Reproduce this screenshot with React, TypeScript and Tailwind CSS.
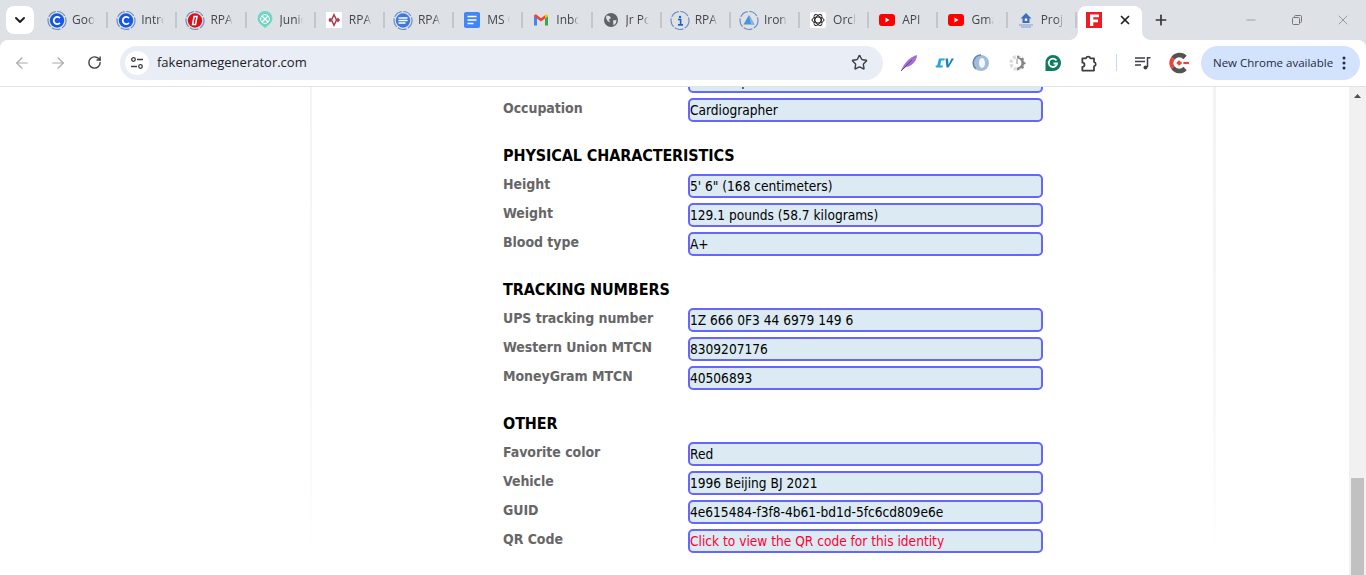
import React from 'react';
import { ArrowLeft, ArrowRight, ChevronDown, Minus, Plus, RotateCw, Star, X } from 'lucide-react';

const Ring: React.FC<{ children: React.ReactNode }> = ({ children }) => (
  <svg width="21" height="21" viewBox="0 0 20 20">
    <circle cx="10" cy="10" r="9" fill="none" stroke="#6f8cc0" strokeWidth="1.2" strokeDasharray="9 1.6" />
    {children}
  </svg>
);

const CoinC = () => (
  <Ring>
    <circle cx="10" cy="10" r="7.2" fill="#1558e6" />
    <path d="M13 7.600a3.600 3.600 0 1 0 0 4.800" fill="none" stroke="#fff" strokeWidth="1.800" />
  </Ring>
);

const CoinD = () => (
  <Ring>
    <circle cx="10" cy="10" r="7.200" fill="#d8101a" />
    <path d="M9 6h3l-1.400 8H7.600z" fill="none" stroke="#fff" strokeWidth="1.500" />
  </Ring>
);

const CoinLines = () => (
  <Ring>
    <circle cx="10" cy="10" r="7.200" fill="#3d78e6" />
    <path d="M6 7.500h8M6 10h8M6 12.500h6" stroke="#fff" strokeWidth="1.500" strokeLinecap="round" />
  </Ring>
);

const CoinInfo = () => (
  <Ring>
    <circle cx="10" cy="6.500" r="1.200" fill="#1d5fc4" />
    <path d="M8 9h2.600v5M8 14.400h5" fill="none" stroke="#1d5fc4" strokeWidth="1.600" />
  </Ring>
);

const CoinIron = () => (
  <Ring>
    <path d="M10 4.500l5.500 9.500h-11z" fill="#4a94d6" />
    <path d="M10 4.500l2 9.500h3.500z" fill="#7fb8e6" />
  </Ring>
);

const Pin = () => (
  <svg width="16" height="18" viewBox="0 0 16 18">
    <path d="M8 17L2.600 12.400A7.400 7.400 0 1 1 13.400 12.400z" fill="#6fd6c6" />
    <path d="M5 5l6 6M11 5l-6 6" stroke="#fff" strokeWidth="1.400" />
    <circle cx="8" cy="8" r="4.400" fill="none" stroke="#fff" strokeWidth="1" />
  </svg>
);

const Diamonds = () => (
  <svg width="16" height="16" viewBox="0 0 16 16">
    <rect width="16" height="16" fill="#fff" />
    <path d="M8 1l3.400 7L8 15 4.600 8z" fill="#b33a55" />
    <path d="M8 4.600l1.700 3.400L8 11.400 6.300 8z" fill="#fff" />
    <path d="M4 5.600L6 8l-2 2.600L2.400 8zM12 5.600L14 8l-2 2.600L10 8z" fill="#a8405a" />
  </svg>
);

const Docs = () => (
  <svg width="16" height="16" viewBox="0 0 16 16">
    <rect width="16" height="16" rx="2" fill="#4285f4" />
    <path d="M3.500 4.500h9M3.500 8h9M3.500 11.500h6" stroke="#fff" strokeWidth="1.500" />
  </svg>
);

const Gmail = () => (
  <svg width="16" height="16" viewBox="0 0 16 16">
    <path d="M1 13.500V4l3 2.200v7.300z" fill="#4285f4" />
    <path d="M12 13.500V6.200L15 4v9.500z" fill="#34a853" />
    <path d="M1 4.200C1 2.600 2.600 2 3.600 2.800L8 6.200 12 3.200 12 6.600 8 9.500 1 4.200z" fill="#ea4335" />
    <path d="M12 3.200l.4-.4C13.500 2 15 2.700 15 4.200l-3 2.400z" fill="#fbbc04" />
  </svg>
);

const Globe = () => (
  <svg width="16" height="16" viewBox="0 0 16 16">
    <circle cx="8" cy="8" r="7" fill="#5f6368" />
    <path d="M3.500 3.500l3 .5 1.500 2-2 1.500 1 3-2.500-1.500-1.500-3zM10 8.500l3.500-.5-.5 3-2.500 2.500z" fill="#dee1e6" />
  </svg>
);

const Knot = () => (
  <svg width="16" height="16" viewBox="0 0 16 16">
    <rect width="16" height="16" rx="2" fill="#fff" />
    <g fill="none" stroke="#222" strokeWidth="1">
      <ellipse cx="8" cy="8" rx="6" ry="3" />
      <ellipse cx="8" cy="8" rx="6" ry="3" transform="rotate(60 8 8)" />
      <ellipse cx="8" cy="8" rx="6" ry="3" transform="rotate(120 8 8)" />
    </g>
  </svg>
);

const YouTube = () => (
  <svg width="16" height="16" viewBox="0 0 16 16">
    <rect y="2" width="16" height="12" rx="3" fill="#f00" />
    <path d="M6.500 5.500l4 2.500-4 2.500z" fill="#fff" />
  </svg>
);

const House = () => (
  <svg width="16" height="16" viewBox="0 0 16 16">
    <path d="M8 1L2.500 6.500h2V11h7V6.500h2z" fill="#3f6fb8" />
    <rect x="6.800" y="6.500" width="2.400" height="2.400" fill="#fff" />
    <path d="M1 13h14M3 15h10" stroke="#7c9fd0" strokeWidth="1.200" />
  </svg>
);

const LetterF = () => (
  <svg width="16" height="16" viewBox="0 0 16 16">
    <rect width="16" height="16" fill="#ee1c25" />
    <path d="M4 2.500h9v2.800H7.300v2.200h4.700v2.700H7.300v3.800H4z" fill="#fff" />
  </svg>
);

const tabs: { title: string; icon: React.ReactNode }[] = [
  { title: 'Google', icon: <CoinC /> },
  { title: 'Introduction', icon: <CoinC /> },
  { title: 'RPA', icon: <CoinD /> },
  { title: 'Junior', icon: <Pin /> },
  { title: 'RPA', icon: <Diamonds /> },
  { title: 'RPA', icon: <CoinLines /> },
  { title: 'MS Office', icon: <Docs /> },
  { title: 'Inbox', icon: <Gmail /> },
  { title: 'Jr Power', icon: <Globe /> },
  { title: 'RPA', icon: <CoinInfo /> },
  { title: 'Iron', icon: <CoinIron /> },
  { title: 'Orchestrator', icon: <Knot /> },
  { title: 'API', icon: <YouTube /> },
  { title: 'Gmail', icon: <YouTube /> },
  { title: 'Project', icon: <House /> },
];

const TabBar = () => (
  <div className="flex h-10 items-start bg-[#dee1e6] pl-[6px]">
    <div className="mr-1 mt-[6px] flex h-7 w-7 items-center justify-center rounded-lg bg-white">
      <ChevronDown size={16} strokeWidth={3} className="text-[#222]" />
    </div>
    {tabs.map((tab, idx) => (
      <div key={idx} className="relative flex h-10 w-[69.2px] shrink-0 items-center pl-[9px]">
        <div className="flex w-5 shrink-0 items-center justify-center">{tab.icon}</div>
        <span className="ml-[5px] w-[23px] overflow-hidden whitespace-nowrap text-xs text-[#45474a] [mask-image:linear-gradient(to_right,black_70%,transparent)]">
          {tab.title}
        </span>
        <div className="absolute -right-px top-3 h-4 w-[2px] bg-[#c3c6cb]" />
      </div>
    ))}
    <div className="relative ml-[2px] mt-[6px] flex h-[34px] w-[64px] items-center rounded-t-lg bg-white pb-[6px] pl-2">
      <span className="absolute -left-2 bottom-0 h-2 w-2 bg-[radial-gradient(circle_at_0_0,transparent_7.5px,white_8px)]" />
      <span className="absolute -right-2 bottom-0 h-2 w-2 bg-[radial-gradient(circle_at_100%_0,transparent_7.5px,white_8px)]" />
      <LetterF />
      <X size={14} strokeWidth={3} className="ml-[16px] text-[#222]" />
    </div>
    <Plus size={16} strokeWidth={2.5} className="ml-[11px] mt-3 text-[#333]" />
    <div className="ml-auto flex h-10 items-center">
      <div className="flex w-[46px] justify-center"><Minus size={14} strokeWidth={1} className="text-[#777]" /></div>
      <div className="flex w-[46px] justify-center">
        <svg width="12" height="12" viewBox="0 0 12 12" fill="none" stroke="#777" strokeWidth="1">
          <rect x="1.500" y="3.500" width="7" height="7" rx="1" />
          <path d="M3.500 3.500v-1a1 1 0 0 1 1-1h5a1 1 0 0 1 1 1v5a1 1 0 0 1-1 1h-1" />
        </svg>
      </div>
      <div className="flex w-[46px] justify-center"><X size={16} strokeWidth={1} className="text-[#777]" /></div>
    </div>
  </div>
);

const Feather = () => (
  <svg width="18" height="18" viewBox="0 0 18 18">
    <path d="M1 17C3 11 9 3 17 1c0 5-4 11-11 12z" fill="#a56fd0" />
    <path d="M1 17L12 6" stroke="#6d3c9e" strokeWidth="1" />
  </svg>
);

const CvIcon = () => (
  <svg width="20" height="18" viewBox="0 0 20 18">
    <circle cx="1.500" cy="12.500" r="1" fill="#29a3e0" />
    <path d="M4 4.500h6l-.8 2H6.200l-1 5H8l-.5 2H3c-1 0-1.200-.6-1-1.500z" fill="#29a3e0" />
    <path d="M10.500 4.500H13l.5 6 3-6H19l-5.500 9h-2z" fill="#1d82c4" />
  </svg>
);

const SphereIcon = () => (
  <svg width="18" height="18" viewBox="0 0 18 18">
    <circle cx="9" cy="9" r="8" fill="#a3bcd8" />
    <ellipse cx="10" cy="9" rx="3" ry="5" fill="#f4f8fb" />
    <path d="M9 1a8 8 0 0 0-5 14" fill="none" stroke="#5d86b3" strokeWidth="1.500" />
  </svg>
);

const GearIcon = () => (
  <svg width="18" height="18" viewBox="0 0 18 18">
    <circle cx="9" cy="9" r="6" fill="none" stroke="#dcdcdc" strokeWidth="3.500" strokeDasharray="3 1.700" />
    <path d="M9 1.500V4.500A4.500 4.500 0 0 1 9 13.500v3l2-.5 .5-1.600 1.800-.4 1.400 1 1.300-1.600-.8-1.600 .9-1.600 1.500-.3V8.500L16 8l-.8-1.700.8-1.500-1.400-1.400-1.500.9L11.500 3.800 11 2z" fill="#858585" />
    <path d="M9 5v5" stroke="#8a8a8a" strokeWidth="1" />
  </svg>
);

const GrammarlyIcon = () => (
  <svg width="18" height="18" viewBox="0 0 18 18">
    <path d="M9 1a8 8 0 0 1 0 16H1.500V9A7.500 7.500 0 0 1 9 1z" fill="#0f7a5f" />
    <path d="M12.500 6.500a4.200 4.200 0 1 0 .6 3H9.500" fill="none" stroke="#fff" strokeWidth="1.800" />
  </svg>
);

const PuzzleIcon = () => (
  <svg width="20" height="20" viewBox="0 0 18 18" fill="none" stroke="#3c3f43" strokeWidth="1.600" strokeLinejoin="round">
    <path d="M2.500 4.500h3.300a2 2 0 0 1 3.900 0H13v3.300a2 2 0 0 1 0 3.900v3.800H2.500v-3.300a1.800 1.800 0 0 0 0-3.900z" transform="translate(.5 .3)" />
  </svg>
);

const MediaIcon = () => (
  <svg width="18" height="18" viewBox="0 0 18 18" fill="none" stroke="#3c3f43" strokeWidth="1.500">
    <path d="M1 4h10M1 7.500h10M1 11h6" />
    <path d="M13.500 13V3.800h3" />
    <circle cx="11.500" cy="13.500" r="2" fill="#3c3f43" stroke="none" />
  </svg>
);

const CIcon = () => (
  <svg width="22" height="22" viewBox="0 0 20 20">
    <path d="M17 3.500A9 9 0 0 0 3 4.500L6 7a5 5 0 0 1 8-.5z" fill="#55534f" />
    <path d="M3 4.500a9 9 0 0 0 0 11L6 13a5 5 0 0 1 0-6z" fill="#e8453c" />
    <path d="M3 15.500a9 9 0 0 0 14 1l-3-3a5 5 0 0 1-8-.5z" fill="#55534f" />
    <path d="M10 7.500L13 10l-3 2.500L7.500 10z" fill="#e8453c" />
    <path d="M14 10h5" stroke="#e8453c" strokeWidth="2" />
  </svg>
);

const ToolbarIcon: React.FC<{ children: React.ReactNode }> = ({ children }) => (
  <div className="flex w-9 items-center justify-center">{children}</div>
);

const Toolbar = () => (
  <div className="bg-[#dee1e6]">
    <div className="flex h-[47px] items-center rounded-t-lg border-b border-[#e3e3e3] bg-white pb-[1px]">
      <div className="flex w-[120px] items-center pl-[4px]">
        <ToolbarIcon><ArrowLeft size={18} strokeWidth={1.5} className="text-[#a6a8ab]" /></ToolbarIcon>
        <ToolbarIcon><ArrowRight size={18} strokeWidth={1.5} className="text-[#a6a8ab]" /></ToolbarIcon>
        <ToolbarIcon><RotateCw size={15} strokeWidth={2.2} className="text-[#3c3f43]" /></ToolbarIcon>
      </div>
      <div className="flex h-[34px] w-[763px] items-center rounded-full bg-[#e9edf6] pl-[5px] pr-[15px]">
        <div className="flex h-6 w-6 items-center justify-center rounded-full bg-white">
          <svg width="14" height="14" viewBox="0 0 14 14" fill="none" stroke="#3c3f43" strokeWidth="1.300">
            <circle cx="3.500" cy="3.500" r="1.800" />
            <path d="M7 3.500h6M1 10.500h6" />
            <circle cx="10.500" cy="10.500" r="1.800" />
          </svg>
        </div>
        <span className="ml-2 mt-px text-[13px] text-[#202124] [font-family:'Open_Sans',sans-serif]">fakenamegenerator.com</span>
        <Star size={17} strokeWidth={2} className="ml-auto text-[#3c3f43]" />
      </div>
      <div className="ml-2 flex items-center">
        <ToolbarIcon><Feather /></ToolbarIcon>
        <ToolbarIcon><CvIcon /></ToolbarIcon>
        <ToolbarIcon><SphereIcon /></ToolbarIcon>
        <ToolbarIcon><GearIcon /></ToolbarIcon>
        <ToolbarIcon><GrammarlyIcon /></ToolbarIcon>
        <ToolbarIcon><PuzzleIcon /></ToolbarIcon>
      </div>
      <div className="ml-[9px] h-[17px] w-[1px] bg-[#c5d8f5]" />
      <div className="ml-[8px] flex items-center">
        <ToolbarIcon><MediaIcon /></ToolbarIcon>
        <ToolbarIcon><CIcon /></ToolbarIcon>
      </div>
      <div className="ml-[4px] flex h-[34px] w-[159px] items-center rounded-full bg-[#d3e3fd] pl-3">
        <span className="text-[11.5px] text-[#1f2a44] [font-family:'Open_Sans',sans-serif]">New Chrome available</span>
        <svg width="4" height="14" viewBox="0 0 4 14" className="ml-auto mr-[14px]" fill="#1f2a44">
          <circle cx="2" cy="2" r="1.500" />
          <circle cx="2" cy="7" r="1.500" />
          <circle cx="2" cy="12" r="1.500" />
        </svg>
      </div>
    </div>
  </div>
);

const Row: React.FC<{ label: string; value: string; red?: boolean }> = ({ label, value, red }) => (
  <div className="flex items-start">
    <div className="h-5 w-[185px] text-sm font-bold leading-5 tracking-[-0.05px] text-[#666666]">{label}</div>
    <div className={`h-6 w-[355px] rounded-[5px] border-2 border-[#6666ff] bg-[#dbeaf3] text-[13.6px] leading-5 ${red ? 'text-[#ff0033]' : 'text-black'}`}>
      {value}
    </div>
  </div>
);

const Section: React.FC<{ title: string; rows: { label: string; value: string; red?: boolean }[] }> = ({ title, rows }) => (
  <div className="mt-[21px]">
    <h3 className="mb-[5px] h-[26px] text-base font-bold leading-[26px] tracking-[-0.1px] text-black">{title}</h3>
    <div className="flex flex-col gap-[5px]">
      {rows.map((r) => (
        <Row key={r.label} {...r} />
      ))}
    </div>
  </div>
);

const Scrollbar = () => (
  <div className="flex w-[17px] shrink-0 flex-col bg-[#f1f1f1]">
    <svg width="17" height="17" viewBox="0 0 17 17" className="shrink-0">
      <path d="M5 11l3.500-4 3.500 4z" fill="#505050" />
    </svg>
    <div className="mx-[2px] mt-[374px] h-[97px] bg-[#c1c1c1]" />
  </div>
);

export default function App() {
  return (
    <div className="flex h-[575px] w-[1366px] flex-col overflow-hidden bg-white [font-family:'DejaVu_Sans_Condensed','DejaVu_Sans',sans-serif]">
      <div className="[font-family:'Open_Sans',sans-serif]"><TabBar /></div>
      <Toolbar />
      <div className="flex min-h-0 flex-1">
        <div className="min-w-0 flex-1 overflow-hidden">
          <div className="ml-[310px] h-[480px] w-[906px] border-y-0 border-l-[2px] border-r-[3px] border-[#f7f7f7] pl-[191px] [border-image:linear-gradient(#f3f3f3,#f8f8f8_70%,#fdfdfd_95%,#fff)_1]">
            <div className="-mt-[18px] flex flex-col gap-[5px]">
              <Row label="Employer" value="Ellis Shop" />
              <Row label="Occupation" value="Cardiographer" />
            </div>
            <Section
              title="PHYSICAL CHARACTERISTICS"
              rows={[
                { label: 'Height', value: '5\' 6" (168 centimeters)' },
                { label: 'Weight', value: '129.1 pounds (58.7 kilograms)' },
                { label: 'Blood type', value: 'A+' },
              ]}
            />
            <Section
              title="TRACKING NUMBERS"
              rows={[
                { label: 'UPS tracking number', value: '1Z 666 0F3 44 6979 149 6' },
                { label: 'Western Union MTCN', value: '8309207176' },
                { label: 'MoneyGram MTCN', value: '40506893' },
              ]}
            />
            <Section
              title="OTHER"
              rows={[
                { label: 'Favorite color', value: 'Red' },
                { label: 'Vehicle', value: '1996 Beijing BJ 2021' },
                { label: 'GUID', value: '4e615484-f3f8-4b61-bd1d-5fc6cd809e6e' },
                { label: 'QR Code', value: 'Click to view the QR code for this identity', red: true },
              ]}
            />
          </div>
        </div>
        <Scrollbar />
      </div>
    </div>
  );
}
